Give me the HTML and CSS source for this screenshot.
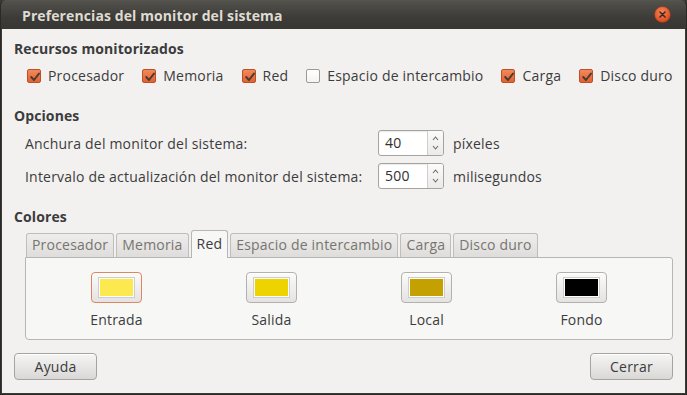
FILE: index.html
```html
<!DOCTYPE html>
<html lang="es">
<head>
<meta charset="utf-8">
<title>Preferencias del monitor del sistema</title>
<link rel="stylesheet" href="styles.css">
</head>
<body>
<div class="window">
  <div class="titlebar">
    <span class="title">Preferencias del monitor del sistema</span>
    <span class="close"><svg width="17" height="17" viewBox="0 0 17 17"><defs><radialGradient id="cg" cx="45%" cy="35%" r="65%"><stop offset="0" stop-color="#f8875a"/><stop offset="1" stop-color="#d9471b"/></radialGradient></defs><circle cx="8.5" cy="8.5" r="8" fill="url(#cg)" stroke="#7a3a20" stroke-width="0.6"/><path d="M6 6 L11 11 M11 6 L6 11" stroke="#3a2a22" stroke-width="1.6" stroke-linecap="round"/></svg></span>
  </div>
  <div class="content">
    <div class="heading h-first">Recursos monitorizados</div>
    <div class="checks">
      <div class="check"><span class="box on"><svg width="14" height="14" viewBox="0 0 14 14"><path d="M3.2 7 L6 10 L11 3.6" fill="none" stroke="#4a3a33" stroke-width="1.9" stroke-linecap="round" stroke-linejoin="round"/></svg></span><span class="ck-label">Procesador</span></div>
      <div class="check"><span class="box on"><svg width="14" height="14" viewBox="0 0 14 14"><path d="M3.2 7 L6 10 L11 3.6" fill="none" stroke="#4a3a33" stroke-width="1.9" stroke-linecap="round" stroke-linejoin="round"/></svg></span><span class="ck-label">Memoria</span></div>
      <div class="check"><span class="box on"><svg width="14" height="14" viewBox="0 0 14 14"><path d="M3.2 7 L6 10 L11 3.6" fill="none" stroke="#4a3a33" stroke-width="1.9" stroke-linecap="round" stroke-linejoin="round"/></svg></span><span class="ck-label">Red</span></div>
      <div class="check"><span class="box off"></span><span class="ck-label">Espacio de intercambio</span></div>
      <div class="check"><span class="box on"><svg width="14" height="14" viewBox="0 0 14 14"><path d="M3.2 7 L6 10 L11 3.6" fill="none" stroke="#4a3a33" stroke-width="1.9" stroke-linecap="round" stroke-linejoin="round"/></svg></span><span class="ck-label">Carga</span></div>
      <div class="check"><span class="box on"><svg width="14" height="14" viewBox="0 0 14 14"><path d="M3.2 7 L6 10 L11 3.6" fill="none" stroke="#4a3a33" stroke-width="1.9" stroke-linecap="round" stroke-linejoin="round"/></svg></span><span class="ck-label">Disco duro</span></div>
    </div>

    <div class="heading h-opts">Opciones</div>
    <div class="options">
      <span class="opt-label">Anchura del monitor del sistema:</span>
      <span class="spin"><span class="spin-val">40</span><span class="spin-btns"><svg width="7" height="20" viewBox="0 0 7 20"><path d="M1 7 L3.5 4 L6 7" fill="none" stroke="#6a6a6a" stroke-width="1.1"/><path d="M1 13 L3.5 16 L6 13" fill="none" stroke="#6a6a6a" stroke-width="1.1"/></svg></span></span>
      <span class="unit">píxeles</span>
      <span class="opt-label">Intervalo de actualización del monitor del sistema:</span>
      <span class="spin"><span class="spin-val">500</span><span class="spin-btns"><svg width="7" height="20" viewBox="0 0 7 20"><path d="M1 7 L3.5 4 L6 7" fill="none" stroke="#6a6a6a" stroke-width="1.1"/><path d="M1 13 L3.5 16 L6 13" fill="none" stroke="#6a6a6a" stroke-width="1.1"/></svg></span></span>
      <span class="unit">milisegundos</span>
    </div>

    <div class="heading h-colors">Colores</div>
    <div class="notebook">
      <div class="tabs">
        <span class="tab">Procesador</span>
        <span class="tab">Memoria</span>
        <span class="tab active">Red</span>
        <span class="tab">Espacio de intercambio</span>
        <span class="tab">Carga</span>
        <span class="tab">Disco duro</span>
      </div>
      <div class="panel">
        <div class="color-item"><span class="cbtn focus"><span class="swatch sw-in"></span></span><span class="clabel">Entrada</span></div>
        <div class="color-item"><span class="cbtn"><span class="swatch sw-out"></span></span><span class="clabel">Salida</span></div>
        <div class="color-item"><span class="cbtn"><span class="swatch sw-local"></span></span><span class="clabel">Local</span></div>
        <div class="color-item"><span class="cbtn"><span class="swatch sw-bg"></span></span><span class="clabel">Fondo</span></div>
      </div>
    </div>

    <div class="footer">
      <button class="btn">Ayuda</button>
      <button class="btn">Cerrar</button>
    </div>
  </div>
</div>
</body>
</html>
```

FILE: styles.css
```css
html, body {
  margin: 0;
  padding: 0;
  background: #3a3935;
}
body {
  width: 687px;
  height: 395px;
  overflow: hidden;
  font-family: "Open Sans", "Noto Sans", "DejaVu Sans", sans-serif;
  font-size: 14px;
  letter-spacing: 0.2px;
  color: #3c3c3c;
}
.window {
  width: 687px;
  height: 395px;
  box-sizing: border-box;
  border-radius: 6px 6px 0 0;
  background: #3c3b37;
  border: 1px solid #2a2926;
  border-top-color: #55544f;
  display: flex;
  flex-direction: column;
  overflow: hidden;
}
.titlebar {
  height: 28px;
  flex: none;
  background: linear-gradient(#52514c, #3c3b37 60%, #383733);
  display: flex;
  align-items: center;
  justify-content: space-between;
  padding: 0 15px 0 21px;
}
.title {
  color: #dfdbd2;
  font-weight: bold;
  font-size: 14px;
  letter-spacing: 0.1px;
}
.close {
  display: flex;
  width: 17px;
  height: 17px;
  margin-top: -1px;
}
.content {
  flex: 1;
  background: #f2f1f0;
  margin: 0 1px 1px 1px;
  padding: 0 12px;
  display: flex;
  flex-direction: column;
}
.heading {
  font-weight: bold;
  line-height: 18px;
  height: 18px;
  letter-spacing: 0.1px;
}
.h-first { margin-top: 11px; }
.h-opts { margin-top: 22px; }
.h-colors { margin-top: 19px; }
.checks {
  margin-top: 9px;
  display: flex;
  align-items: center;
  height: 18px;
  padding-left: 13px;
  white-space: nowrap;
}
.check {
  display: flex;
  align-items: center;
  flex: none;
  margin-right: 18px;
}
.check:last-child { margin-right: 0; }
.box {
  width: 14px;
  height: 14px;
  flex: none;
  box-sizing: border-box;
  border-radius: 2px;
  margin-right: 7px;
  display: flex;
  position: relative;
}
.box svg { position: absolute; left: 0; top: 0; }
.box.on {
  background: linear-gradient(#f3895b, #e2612f);
  border: 1px solid #b95027;
}
.box.off {
  background: linear-gradient(#ffffff, #f3f3f3);
  border: 1px solid #9c9a96;
}
.ck-label { line-height: 18px; }
.options {
  margin-top: 5px;
  margin-left: 11px;
  display: grid;
  grid-template-columns: 341px 78px auto;
  grid-template-rows: 26px 26px;
  row-gap: 7px;
  align-items: center;
  white-space: nowrap;
}
.spin {
  margin-left: 12px;
  width: 66px;
  height: 26px;
  box-sizing: border-box;
  border: 1px solid #a5a39f;
  border-radius: 3px;
  background: #fff;
  display: flex;
  box-shadow: inset 0 1px 1px rgba(0,0,0,0.08);
}
.spin-val {
  flex: 1;
  padding-left: 6px;
  line-height: 24px;
  color: #303030;
}
.spin-btns {
  width: 15px;
  border-left: 1px solid #d0cecb;
  background: linear-gradient(#fbfbfb, #ebeae9);
  border-radius: 0 2px 2px 0;
  display: flex;
  align-items: center;
  justify-content: center;
}
.unit { margin-left: 9px; }
.notebook {
  margin-top: 4px;
  margin-left: 11px;
  width: 648px;
}
.tabs {
  display: flex;
  align-items: flex-end;
  gap: 2px;
  padding-left: 1px;
  height: 27px;
  position: relative;
  z-index: 1;
  white-space: nowrap;
}
.tab {
  height: 24px;
  box-sizing: border-box;
  padding: 0 5px;
  line-height: 22px;
  border: 1px solid #c0beba;
  border-bottom: none;
  border-radius: 3px 3px 0 0;
  background: linear-gradient(#eeedec, #dedddb);
  color: #77756f;
}
.tab.active {
  height: 28px;
  margin-bottom: -1px;
  line-height: 25px;
  background: #f7f7f6;
  border-color: #b8b6b2;
  color: #3c3c3c;
}
.panel {
  height: 83px;
  box-sizing: border-box;
  border: 1px solid #b8b6b2;
  border-radius: 0 3px 4px 4px;
  background: #f7f7f6;
  display: grid;
  grid-template-columns: repeat(4, 155px);
  padding: 14px 13px 0 13px;
}
.color-item {
  display: flex;
  flex-direction: column;
  align-items: center;
}
.cbtn {
  width: 51px;
  height: 31px;
  box-sizing: border-box;
  border: 1px solid #b3b1ad;
  border-radius: 4px;
  background: linear-gradient(#fbfbfa, #e4e3e1);
  display: flex;
  align-items: center;
  justify-content: center;
  box-shadow: inset 0 1px 0 #ffffff;
}
.cbtn.focus { border-color: #df8562; }
.swatch {
  width: 35px;
  height: 19px;
  box-sizing: border-box;
  border: 1px solid #ffffff;
  box-shadow: 0 0 0 1px #cfcdca;
}
.sw-in { background: #fce94f; }
.sw-out { background: #edd400; }
.sw-local { background: #c4a000; }
.sw-bg { background: #000000; }
.clabel {
  margin-top: 8px;
  line-height: 18px;
}
.footer {
  margin-top: 13px;
  display: flex;
  justify-content: space-between;
}
.btn {
  width: 83px;
  height: 27px;
  font-family: inherit;
  font-size: 14px;
  letter-spacing: 0.2px;
  color: #3c3c3c;
  border: 1px solid #a6a4a0;
  border-radius: 4px;
  background: linear-gradient(#f5f5f4, #d9d8d6);
  box-shadow: inset 0 1px 0 #ffffff;
  padding: 0;
}
```
